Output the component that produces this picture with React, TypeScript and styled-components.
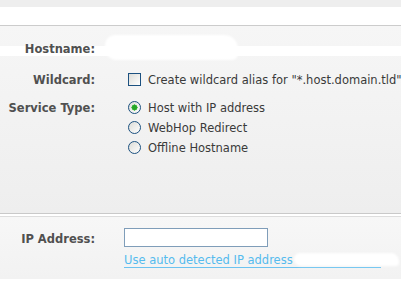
import styled, { createGlobalStyle } from "styled-components";

const GlobalStyle = createGlobalStyle`
  html, body {
    margin: 0;
    padding: 0;
    background: #ffffff;
  }
  body {
    font-family: "DejaVu Sans", Verdana, sans-serif;
    font-size: 11.5px;
    color: #3a3a3a;
  }
`;

const Page = styled.div`
  width: 401px;
  display: flex;
  flex-direction: column;
`;

const TopBand = styled.div`
  height: 7px;
  background: #eeeeee;
`;

const WhiteGap = styled.div`
  height: 18px;
  background: #ffffff;
`;

const Section = styled.div<{ $height: number; $pt: number }>`
  height: ${(p) => p.$height}px;
  box-sizing: border-box;
  padding-top: ${(p) => p.$pt}px;
  background: linear-gradient(to bottom, #f6f6f6, #eeeeee);
  display: flex;
  flex-direction: column;
`;

const TopSection = styled(Section)`
  border-top: 1px solid #cccccc;
`;

const BottomSection = styled(Section)`
  background: linear-gradient(to bottom, #f7f7f7, #f2f2f2);
`;

const Divider = styled.div`
  height: 2px;
  background: #ffffff;
  border-top: 1px solid #c9c9c9;
  border-bottom: 1px solid #dddddd;
`;

const Row = styled.div<{ $mt?: number }>`
  display: grid;
  grid-template-columns: 95px 1fr;
  column-gap: 29px;
  align-items: start;
  margin-top: ${(p) => p.$mt ?? 0}px;
  line-height: 14px;
`;

const HostRow = styled(Row)`
  height: 15px;
  background: linear-gradient(
    to bottom,
    transparent 5px,
    #ffffff 5px,
    #ffffff 15px
  );
`;

const Label = styled.div<{ $pt?: number }>`
  text-align: right;
  font-weight: bold;
  color: #505050;
  padding-top: ${(p) => p.$pt ?? 0}px;
`;

const Redacted = styled.div<{ $w: number; $h: number }>`
  width: ${(p) => p.$w}px;
  height: ${(p) => p.$h}px;
  background: #ffffff;
  border-radius: 10px 14px 6px 12px;
  filter: blur(0.8px);
`;

const HostValue = styled(Redacted)`
  margin-left: -19px;
  margin-top: -6px;
`;

const Options = styled.div`
  display: flex;
  flex-direction: column;
`;

const Option = styled.label`
  display: flex;
  align-items: center;
  gap: 7px;
  height: 20px;
  margin-left: 4px;
  color: #3a3a3a;
  white-space: nowrap;
`;

const OptionText = styled.span`
  padding-top: 2px;
`;

const CheckOption = styled(Option)`
  height: 14px;
`;

const Box = styled.span`
  width: 11px;
  height: 11px;
  flex: none;
  border: 1px solid #1c5180;
  background: linear-gradient(135deg, #dcdcd7, #ffffff);
`;

const Radio = styled.span<{ $on?: boolean }>`
  width: 11px;
  height: 11px;
  flex: none;
  border: 1px solid #1c5180;
  border-radius: 50%;
  background: ${(p) =>
    p.$on
      ? "radial-gradient(circle, #26a526 0 2.2px, #62c962 2.4px 3px, transparent 3.2px), linear-gradient(135deg, #dcdcd7, #ffffff)"
      : "linear-gradient(135deg, #dcdcd7, #ffffff)"};
`;

const IpInput = styled.div`
  width: 144px;
  height: 19px;
  box-sizing: border-box;
  border: 1px solid #7f9db9;
  background: #ffffff;
`;

const Control = styled.div`
  display: flex;
  flex-direction: column;
`;

const AutoLink = styled.a`
  display: flex;
  align-items: center;
  margin-top: 7px;
  width: 257px;
  height: 14px;
  color: #55bbee;
  border-bottom: 1px solid #6cc3f0;
  box-sizing: border-box;
  text-decoration: none;
  white-space: nowrap;
  line-height: 13px;
`;

const IpValue = styled(Redacted)`
  margin-left: 1px;
  margin-top: -3px;
  flex: none;
`;

export default function App() {
  return (
    <>
      <GlobalStyle />
      <Page>
        <TopBand />
        <WhiteGap />
        <TopSection $height={188} $pt={15}>
          <HostRow>
            <Label $pt={1}>Hostname:</Label>
            <HostValue $w={133} $h={25} />
          </HostRow>
          <Row $mt={16}>
            <Label $pt={1}>Wildcard:</Label>
            <CheckOption>
              <Box />
              <OptionText>
                Create wildcard alias for "*.host.domain.tld"
              </OptionText>
            </CheckOption>
          </Row>
          <Row $mt={10}>
            <Label $pt={4}>Service Type:</Label>
            <Options>
              <Option>
                <Radio $on />
                <OptionText>Host with IP address</OptionText>
              </Option>
              <Option>
                <Radio />
                <OptionText>WebHop Redirect</OptionText>
              </Option>
              <Option>
                <Radio />
                <OptionText>Offline Hostname</OptionText>
              </Option>
            </Options>
          </Row>
        </TopSection>
        <Divider />
        <BottomSection $height={62} $pt={11}>
          <Row>
            <Label $pt={4}>IP Address:</Label>
            <Control>
              <IpInput />
              <AutoLink href="#">
                Use auto detected IP address
                <IpValue $w={105} $h={13} />
              </AutoLink>
            </Control>
          </Row>
        </BottomSection>
      </Page>
    </>
  );
}
